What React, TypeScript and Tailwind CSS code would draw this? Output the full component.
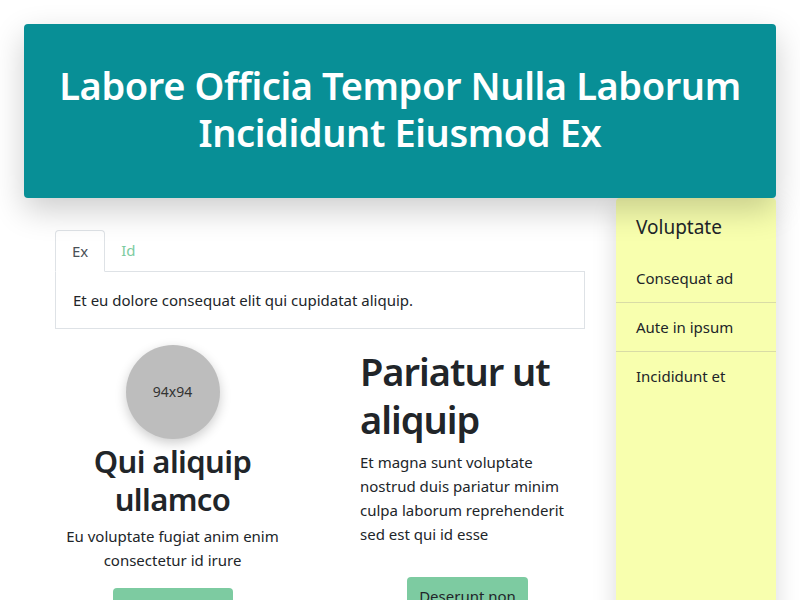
export default function App() {
  return (
    <div className="min-h-[600px] bg-white p-6 text-[#212529]" style={{ fontFamily: '"Noto Sans", sans-serif' }}>
      <header className="relative z-10 rounded bg-[#088f96] px-4 pt-[38px] pb-[42px] text-center shadow-[0_12px_32px_rgba(0,0,0,0.2)]">
        <h1 className="text-[38px] font-semibold leading-[47px] tracking-[-0.4px] text-white">
          Labore Officia Tempor Nulla Laborum Incididunt Eiusmod Ex
        </h1>
      </header>
      <div className="flex">
        <main className="flex-1 px-[31px] pt-8">
          <div className="flex text-[15px]">
            <div className="-mb-px rounded-t border border-b-white border-[#dee2e6] bg-white px-4 py-2 leading-6 text-[#495057]">
              Ex
            </div>
            <div className="px-4 py-2 leading-6 text-[#7dcba1]">Id</div>
          </div>
          <div className="border border-[#dee2e6] px-[17px] py-4 text-[15px] leading-6">
            Et eu dolore consequat elit qui cupidatat aliquip.
          </div>
          <div className="mt-4 grid grid-cols-2 gap-[60px]">
            <div className="flex flex-col items-center px-2.5 text-center">
              <div className="flex h-[94px] w-[94px] items-center justify-center rounded-full bg-[#bdbdbd] text-sm text-[#333] shadow-[0_4px_12px_rgba(0,0,0,0.2)]">
                94x94
              </div>
              <h2 className="mt-[3px] text-[31px] font-semibold leading-[38px] tracking-[-0.6px]">Qui aliquip ullamco</h2>
              <p className="mt-1.5 text-[15px] leading-6">Eu voluptate fugiat anim enim consectetur id irure</p>
              <button className="mt-4 h-[38px] w-[120px] rounded bg-[#7dcba1] text-[15px]">Consequat</button>
            </div>
            <div className="flex flex-col px-2.5 pt-0.5">
              <h2 className="text-[38px] font-semibold leading-[48px] tracking-[-1px]">Pariatur ut aliquip</h2>
              <p className="mt-[7px] text-[15px] leading-6">
                Et magna sunt voluptate nostrud duis pariatur minim culpa laborum reprehenderit sed est qui id esse
              </p>
              <button className="mt-[31px] h-[38px] self-center rounded bg-[#7dcba1] px-3 text-[15px]">Deserunt non</button>
            </div>
          </div>
        </main>
        <aside className="min-h-[378px] w-40 shrink-0 self-stretch rounded-t-sm bg-[#f8ffae] shadow-[0_8px_24px_rgba(0,0,0,0.15)]">
          <h3 className="px-5 pt-[15px] pb-[13px] text-[19px] leading-7">Voluptate</h3>
          <ul className="text-[15px] leading-6">
            <li className="border-b border-[#d9dca6] px-5 py-3">Consequat ad</li>
            <li className="border-b border-[#d9dca6] px-5 py-3">Aute in ipsum</li>
            <li className="px-5 py-3">Incididunt et</li>
          </ul>
        </aside>
      </div>
    </div>
  );
}
